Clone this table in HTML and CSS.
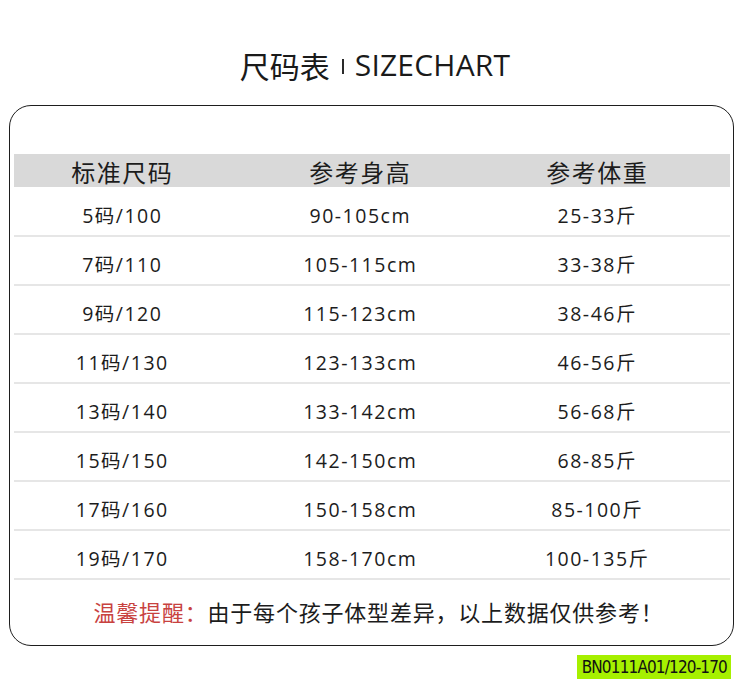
FILE: index.html
```html
<!DOCTYPE html>
<html lang="zh-CN">
<head>
<meta charset="utf-8">
<title>尺码表 SIZECHART</title>
<link rel="stylesheet" href="styles.css">
</head>
<body>
<div class="page">
  <h1 class="title"><span class="title-cn">尺码表</span><span class="divider"></span><span class="title-en">SIZECHART</span></h1>
  <div class="chart">
    <div class="head">
      <div class="cell">标准尺码</div>
      <div class="cell">参考身高</div>
      <div class="cell">参考体重</div>
    </div>
    <div class="row"><div class="cell">5码/100</div><div class="cell">90-105cm</div><div class="cell">25-33斤</div></div>
    <div class="row"><div class="cell">7码/110</div><div class="cell">105-115cm</div><div class="cell">33-38斤</div></div>
    <div class="row"><div class="cell">9码/120</div><div class="cell">115-123cm</div><div class="cell">38-46斤</div></div>
    <div class="row"><div class="cell">11码/130</div><div class="cell">123-133cm</div><div class="cell">46-56斤</div></div>
    <div class="row"><div class="cell">13码/140</div><div class="cell">133-142cm</div><div class="cell">56-68斤</div></div>
    <div class="row"><div class="cell">15码/150</div><div class="cell">142-150cm</div><div class="cell">68-85斤</div></div>
    <div class="row"><div class="cell">17码/160</div><div class="cell">150-158cm</div><div class="cell">85-100斤</div></div>
    <div class="row"><div class="cell">19码/170</div><div class="cell">158-170cm</div><div class="cell">100-135斤</div></div>
    <p class="note"><span class="note-label">温馨提醒：</span>由于每个孩子体型差异，以上数据仅供参考！</p>
  </div>
  <div class="badge-wrap"><span class="badge">BN0111A01/120-170</span></div>
</div>
</body>
</html>
```
FILE: styles.css
```css
html, body {
  margin: 0;
  padding: 0;
  background: #ffffff;
}
body {
  width: 750px;
  height: 697px;
  overflow: hidden;
  font-family: "Open Sans", "Noto Sans CJK SC", sans-serif;
  color: #1c1c1c;
}
.page {
  display: flex;
  flex-direction: column;
}
.title {
  margin: 0;
  padding-top: 45px;
  height: 40px;
  line-height: 40px;
  display: flex;
  justify-content: center;
  align-items: center;
  font-weight: 400;
  font-size: 30px;
  color: #1a1a1a;
}
.title-cn {
  font-family: "Noto Sans CJK SC", sans-serif;
  font-size: 30px;
}
.divider {
  display: inline-block;
  width: 2px;
  height: 15px;
  background: #2a2a2a;
  margin: 3px 11px 0 12px;
}
.title-en {
  font-family: "Open Sans", sans-serif;
  font-size: 30px;
  letter-spacing: 0.2px;
}
.chart {
  margin: 20px 0 0 9px;
  width: 725px;
  box-sizing: border-box;
  border: 1.5px solid #1e1e1e;
  border-radius: 22px;
  padding: 47.5px 3.5px 0 3.5px;
  height: 541px;
}
.head, .row {
  display: grid;
  grid-template-columns: 216px 260px 214px 1fr;
}
.head {
  background: #d9d9d9;
  height: 33px;
  box-sizing: border-box;
  padding-top: 2px;
  line-height: 31px;
  font-family: "Noto Sans CJK SC", sans-serif;
  font-size: 24px;
  letter-spacing: 1.5px;
  color: #1c1c1c;
}
.row {
  height: 49px;
  box-sizing: border-box;
  border-bottom: 2px solid #e6e6e6;
  padding-top: 9px;
  line-height: 38px;
  font-size: 19.5px;
  letter-spacing: 1.5px;
  color: #1c1c1c;
}
.head + .row {
  height: 50px;
  padding-top: 10px;
}
.cell {
  text-align: center;
  white-space: nowrap;
  padding-left: 1.5px;
}
.note {
  margin: 0;
  padding-top: 18px;
  line-height: 26px;
  text-align: center;
  font-family: "Noto Sans CJK SC", sans-serif;
  font-size: 22px;
  letter-spacing: 0.8px;
  color: #1c1c1c;
  padding-left: 14px;
}
.note-label {
  color: #c8423f;
}
.badge-wrap {
  display: flex;
  justify-content: flex-end;
  padding-right: 19px;
  margin-top: 9px;
}
.badge {
  display: inline-block;
  background: #a6f000;
  height: 24px;
  line-height: 25px;
  padding: 0 4px 0 5px;
  font-family: "DejaVu Sans Condensed", "Liberation Sans Narrow", "Liberation Sans", sans-serif;
  font-size: 17px;
  letter-spacing: -0.85px;
  color: #111;
}
```
